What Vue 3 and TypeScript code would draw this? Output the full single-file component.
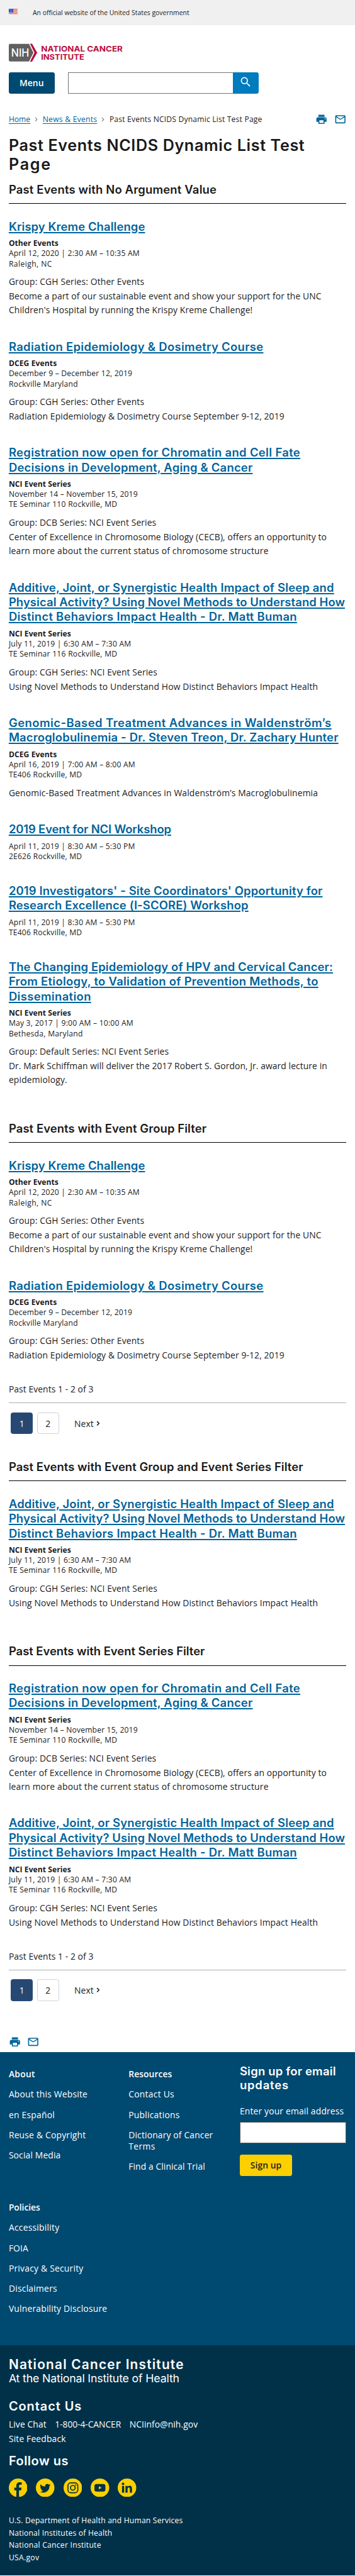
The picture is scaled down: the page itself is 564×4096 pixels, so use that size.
<script setup lang="ts">
import type { Directive } from 'vue'

interface Line {
  text: string
  width: number
}

interface EventItem {
  title: Line[]
  series?: Line
  meta: Line[]
  body?: Line[]
}

interface Section {
  heading: Line
  events: EventItem[]
  paged?: boolean
}

// Tracks a line of text so that it spans the given number of layout pixels.
const vFit: Directive<HTMLElement, number> = {
  mounted(el, { value }) {
    const root = el.closest('.page')
    const count = (el.textContent ?? '').trim().length
    if (!root || !value || count < 2) return
    const scale = root.getBoundingClientRect().width / 650
    const natural = el.getBoundingClientRect().width / scale
    el.style.letterSpacing = `${((value + 1.5 - natural) / (count - 1)).toFixed(4)}px`
  },
}

const line = (text: string, width: number): Line => ({ text, width })

const nciSeries = line('NCI Event Series', 112.5)
const dceg = line('DCEG Events', 86.5)

const krispy: EventItem = {
  title: [line('Krispy Kreme Challenge', 248)],
  series: line('Other Events', 89.5),
  meta: [line('April 12, 2020 | 2:30 AM – 10:35 AM', 238), line('Raleigh, NC', 77.5)],
  body: [
    line('Group: CGH Series: Other Events', 246.5),
    line('Become a part of our sustainable event and show your support for the UNC', 571),
    line("Children's Hospital by running the Krispy Kreme Challenge!", 445),
  ],
}

const radiation: EventItem = {
  title: [line('Radiation Epidemiology & Dosimetry Course', 464.5)],
  series: dceg,
  meta: [line('December 9 – December 12, 2019', 224.5), line('Rockville Maryland', 125)],
  body: [
    line('Group: CGH Series: Other Events', 246.5),
    line('Radiation Epidemiology & Dosimetry Course September 9-12, 2019', 503),
  ],
}

const chromatin: EventItem = {
  title: [
    line('Registration now open for Chromatin and Cell Fate', 532),
    line('Decisions in Development, Aging & Cancer', 445),
  ],
  series: nciSeries,
  meta: [line('November 14 – November 15, 2019', 234.5), line('TE Seminar 110 Rockville, MD', 197)],
  body: [
    line('Group: DCB Series: NCI Event Series', 268.5),
    line('Center of Excellence in Chromosome Biology (CECB), offers an opportunity to', 580.5),
    line('learn more about the current status of chromosome structure', 474),
  ],
}

const additive: EventItem = {
  title: [
    line('Additive, Joint, or Synergistic Health Impact of Sleep and', 594),
    line('Physical Activity? Using Novel Methods to Understand How', 614),
    line('Distinct Behaviors Impact Health - Dr. Matt Buman', 526),
  ],
  series: nciSeries,
  meta: [line('July 11, 2019 | 6:30 AM – 7:30 AM', 222.5), line('TE Seminar 116 Rockville, MD', 197)],
  body: [
    line('Group: CGH Series: NCI Event Series', 270.5),
    line('Using Novel Methods to Understand How Distinct Behaviors Impact Health', 564.5),
  ],
}

const sections: Section[] = [
  {
    heading: line('Past Events with No Argument Value', 379),
    events: [
      krispy,
      radiation,
      chromatin,
      additive,
      {
        title: [
          line('Genomic-Based Treatment Advances in Waldenström’s', 589),
          line('Macroglobulinemia - Dr. Steven Treon, Dr. Zachary Hunter', 602),
        ],
        series: dceg,
        meta: [line('April 16, 2019 | 7:00 AM – 8:00 AM', 230), line('TE406 Rockville, MD', 132.5)],
        body: [line('Genomic-Based Treatment Advances in Waldenström’s Macroglobulinemia', 564.5)],
      },
      {
        title: [line('2019 Event for NCI Workshop', 296)],
        meta: [line('April 11, 2019 | 8:30 AM – 5:30 PM', 229.5), line('2E626 Rockville, MD', 132.5)],
      },
      {
        title: [
          line("2019 Investigators' - Site Coordinators' Opportunity for", 573),
          line('Research Excellence (I-SCORE) Workshop', 437),
        ],
        meta: [line('April 11, 2019 | 8:30 AM – 5:30 PM', 229.5), line('TE406 Rockville, MD', 132.5)],
      },
      {
        title: [
          line('The Changing Epidemiology of HPV and Cervical Cancer:', 592),
          line('From Etiology, to Validation of Prevention Methods, to', 565),
          line('Dissemination', 149),
        ],
        series: nciSeries,
        meta: [line('May 3, 2017 | 9:00 AM – 10:00 AM', 226.5), line('Bethesda, Maryland', 134)],
        body: [
          line('Group: Default Series: NCI Event Series', 291.5),
          line('Dr. Mark Schiffman will deliver the 2017 Robert S. Gordon, Jr. award lecture in', 581.5),
          line('epidemiology.', 105.5),
        ],
      },
    ],
  },
  { heading: line('Past Events with Event Group Filter', 360.5), events: [krispy, radiation], paged: true },
  { heading: line('Past Events with Event Group and Event Series Filter', 537.5), events: [additive] },
  { heading: line('Past Events with Event Series Filter', 357.5), events: [chromatin, additive], paged: true },
]

const about: Line[] = [
  line('About this Website', 142.5),
  line('en Español', 82.5),
  line('Reuse & Copyright', 139.5),
  line('Social Media', 93.5),
]
const policies: Line[] = [
  line('Accessibility', 91),
  line('FOIA', 34),
  line('Privacy & Security', 135),
  line('Disclaimers', 87),
  line('Vulnerability Disclosure', 178.5),
]
const agencies: Line[] = [
  line('U.S. Department of Health and Human Services', 317),
  line('National Institutes of Health', 188),
  line('National Cancer Institute', 167.5),
  line('USA.gov', 54),
]
</script>

<template>
  <div class="page">
    <div class="banner">
      <svg class="flag" viewBox="0 0 16 11">
        <rect width="16" height="11" fill="#fff" />
        <g fill="#db3e1f">
          <rect v-for="n in 6" :key="n" :y="(n - 1) * 2" width="16" height="1" />
        </g>
        <rect width="8" height="7" fill="#1e33b1" />
        <g fill="#fff">
          <rect x="1" y="1" width="1" height="1" /><rect x="3" y="1" width="1" height="1" /><rect x="5" y="1" width="1" height="1" />
          <rect x="2" y="3" width="1" height="1" /><rect x="4" y="3" width="1" height="1" /><rect x="6" y="3" width="1" height="1" />
          <rect x="1" y="5" width="1" height="1" /><rect x="3" y="5" width="1" height="1" /><rect x="5" y="5" width="1" height="1" />
        </g>
      </svg>
      <span v-fit="285">An official website of the United States government</span>
    </div>

    <header class="header">
      <svg class="logo" viewBox="0 0 210 34">
        <path d="M2.5 1H37L45 17L37 33H2.500Q0 33 0 30.500V3.500Q0 1 2.500 1Z" fill="#606060" />
        <path d="M38.800 .5H42.600L52 17L42.600 33.500H38.800L47 17Z" fill="#bb0e3d" />
        <g font-family="Inter, sans-serif">
          <text x="4.300" y="24.300" font-size="20" font-weight="500" fill="#fff" textLength="33" lengthAdjust="spacingAndGlyphs">NIH</text>
          <g font-size="14.200" font-weight="700" fill="#bb0e3d">
            <text x="59" y="14.500" textLength="149.500" lengthAdjust="spacingAndGlyphs">NATIONAL CANCER</text>
            <text x="59" y="29.900" textLength="79" lengthAdjust="spacingAndGlyphs">INSTITUTE</text>
          </g>
        </g>
      </svg>
      <div class="nav">
        <button class="menu" type="button"><span v-fit="43">Menu</span></button>
        <div class="search">
          <div class="search-field"></div>
          <button class="search-button" type="button" aria-label="Search">
            <svg viewBox="0 0 24 24"><path d="M15.5 14h-.79l-.28-.27A6.47 6.47 0 0 0 16 9.5 6.5 6.5 0 1 0 9.5 16c1.61 0 3.09-.59 4.23-1.57l.27.28v.79l5 4.99L20.49 19zm-6 0a4.5 4.5 0 1 1 0-9 4.5 4.5 0 0 1 0 9z" fill="#fff" /></svg>
          </button>
        </div>
      </div>
    </header>

    <main class="main">
      <div class="crumb-row">
        <nav class="crumbs">
          <a v-fit="38">Home</a>
          <svg class="crumb-sep" viewBox="0 0 6 10"><path d="M1 1.2L4.6 5L1 8.8" fill="none" stroke="#71767a" stroke-width="1.3" /></svg>
          <a v-fit="98">News &amp; Events</a>
          <svg class="crumb-sep" viewBox="0 0 6 10"><path d="M1 1.2L4.6 5L1 8.8" fill="none" stroke="#71767a" stroke-width="1.3" /></svg>
          <span v-fit="278">Past Events NCIDS Dynamic List Test Page</span>
        </nav>
        <div class="share">
          <svg viewBox="0 0 24 24"><path d="M19 8H5c-1.660 0-3 1.340-3 3v6h4v4h12v-4h4v-6c0-1.660-1.340-3-3-3zm-3 11H8v-5h8v5zm3-7c-.55 0-1-.45-1-1s.45-1 1-1 1 .45 1 1-.45 1-1 1zm-1-9H6v4h12V3z" /></svg>
          <svg viewBox="0 0 24 24"><path d="M22 6c0-1.100-.9-2-2-2H4c-1.100 0-2 .9-2 2v12c0 1.100.9 2 2 2h16c1.100 0 2-.9 2-2V6zm-2 0-8 5-8-5h16zm0 12H4V8l8 5 8-5v10z" /></svg>
        </div>
      </div>

      <h1 class="title">
        <span v-fit="540" class="line">Past Events NCIDS Dynamic List Test</span>
        <span v-fit="75" class="line">Page</span>
      </h1>

      <section v-for="section in sections" :key="section.heading.text" class="section">
        <h2 class="section-title">
          <span v-fit="section.heading.width" class="line">{{ section.heading.text }}</span>
        </h2>
        <article v-for="event in section.events" :key="event.title[0].text" class="event">
          <h3 class="event-title">
            <a v-for="l in event.title" :key="l.text" v-fit="l.width" class="line">{{ l.text }}</a>
          </h3>
          <div class="meta">
            <strong v-if="event.series" v-fit="event.series.width" class="line">{{ event.series.text }}</strong>
            <span v-for="l in event.meta" :key="l.text" v-fit="l.width" class="line">{{ l.text }}</span>
          </div>
          <div v-if="event.body" class="body">
            <span v-for="l in event.body" :key="l.text" v-fit="l.width" class="line">{{ l.text }}</span>
          </div>
        </article>
        <div v-if="section.paged" class="pager">
          <p class="count"><span v-fit="153.5" class="line">Past Events 1 - 2 of 3</span></p>
          <div class="pages">
            <span class="page-button current">1</span>
            <span class="page-button">2</span>
            <span class="next">
              <span v-fit="34">Next</span>
              <svg viewBox="0 0 7 10"><path d="M1.300 1.300L5 5L1.300 8.700" fill="none" stroke="#1b1b1b" stroke-width="1.700" /></svg>
            </span>
          </div>
        </div>
      </section>

      <div class="share share-bottom">
        <svg viewBox="0 0 24 24"><path d="M19 8H5c-1.660 0-3 1.340-3 3v6h4v4h12v-4h4v-6c0-1.660-1.340-3-3-3zm-3 11H8v-5h8v5zm3-7c-.55 0-1-.45-1-1s.45-1 1-1 1 .45 1 1-.45 1-1 1zm-1-9H6v4h12V3z" /></svg>
        <svg viewBox="0 0 24 24"><path d="M22 6c0-1.100-.9-2-2-2H4c-1.100 0-2 .9-2 2v12c0 1.100.9 2 2 2h16c1.100 0 2-.9 2-2V6zm-2 0-8 5-8-5h16zm0 12H4V8l8 5 8-5v10z" /></svg>
      </div>
    </main>

    <footer>
      <div class="footer-main">
        <div class="footer-links">
          <div class="group">
            <strong v-fit="46.500" class="line">About</strong>
            <a v-for="l in about" :key="l.text" v-fit="l.width" class="line">{{ l.text }}</a>
          </div>
          <div class="group">
            <strong v-fit="78" class="line">Resources</strong>
            <a v-fit="82" class="line">Contact Us</a>
            <a v-fit="92" class="line">Publications</a>
            <div>
              <a v-fit="153" class="line">Dictionary of Cancer</a>
              <a v-fit="47" class="line">Terms</a>
            </div>
            <a v-fit="138.500" class="line">Find a Clinical Trial</a>
          </div>
          <div class="group policies">
            <strong v-fit="56" class="line">Policies</strong>
            <a v-for="l in policies" :key="l.text" v-fit="l.width" class="line">{{ l.text }}</a>
          </div>
        </div>
        <form class="signup">
          <h3>
            <span v-fit="174.500" class="line">Sign up for email</span>
            <span v-fit="87.500" class="line">updates</span>
          </h3>
          <label><span v-fit="189" class="line">Enter your email address</span></label>
          <div class="email"></div>
          <button type="button"><span v-fit="55.500">Sign up</span></button>
        </form>
      </div>

      <div class="footer-dark">
        <div class="agency">
          <strong v-fit="318.500" class="line">National Cancer Institute</strong>
          <span v-fit="311" class="line">At the National Institute of Health</span>
        </div>
        <h3 class="contact-title"><span v-fit="131.500" class="line">Contact Us</span></h3>
        <div class="contact">
          <div class="contact-row">
            <a v-fit="67.500">Live Chat</a>
            <a v-fit="119.500">1-800-4-CANCER</a>
            <a v-fit="123.500">NCIinfo@nih.gov</a>
          </div>
          <a v-fit="103" class="line">Site Feedback</a>
        </div>
        <h3 class="follow-title"><span v-fit="107.500" class="line">Follow us</span></h3>
        <div class="social">
          <svg viewBox="0 0 34 34">
            <circle cx="17" cy="17" r="17" class="disc" />
            <path class="glyph" d="M13.800 34V21.500H10V16.800H13.800V13.200C13.800 9.200 16.200 7 19.800 7H23.600V11.100H21.200C19.300 11.100 18.700 12 18.700 13.500V16.800H23.400L22.700 21.500H18.700V34Z" />
          </svg>
          <svg viewBox="0 0 34 34">
            <circle cx="17" cy="17" r="17" class="disc" />
            <path class="glyph" transform="translate(7.200 8) scale(.82)" d="M23.950 4.570a10 10 0 0 1-2.820.780 4.960 4.960 0 0 0 2.160-2.730c-.95.560-2 .960-3.130 1.190a4.920 4.920 0 0 0-8.380 4.480C7.690 8.090 4.070 6.130 1.640 3.160a4.930 4.930 0 0 0 1.520 6.570 4.900 4.900 0 0 1-2.230-.610v.060a4.930 4.930 0 0 0 3.950 4.830 5 5 0 0 1-2.210.080 4.940 4.940 0 0 0 4.600 3.420A9.870 9.870 0 0 1 0 19.540a13.990 13.990 0 0 0 7.550 2.210c9.050 0 14-7.500 14-13.990 0-.210 0-.420-.020-.630a9.940 9.940 0 0 0 2.460-2.550z" />
          </svg>
          <svg viewBox="0 0 34 34">
            <circle cx="17" cy="17" r="17" class="disc" />
            <rect x="8" y="8" width="18" height="18" rx="5" class="ring" />
            <circle cx="17" cy="17" r="4.300" class="ring" />
            <circle cx="22.200" cy="11.800" r="1.200" class="glyph" />
          </svg>
          <svg viewBox="0 0 34 34">
            <circle cx="17" cy="17" r="17" class="disc" />
            <rect x="7" y="10" width="20" height="14" rx="3.800" class="glyph" />
            <path class="disc" d="M15 14V20L20.200 17Z" />
          </svg>
          <svg viewBox="0 0 34 34">
            <circle cx="17" cy="17" r="17" class="disc" />
            <circle cx="9.800" cy="9.800" r="2.300" class="glyph" />
            <path class="glyph" d="M7.900 13.600H11.800V26H7.900ZM14.200 13.600H17.900V15.300C18.600 14 20 13.200 21.800 13.200C25.400 13.200 26.200 15.600 26.200 18.900V26H22.300V19.700C22.300 18.200 22.200 16.500 20.300 16.500C18.400 16.500 18.100 18 18.100 19.600V26H14.200Z" />
          </svg>
        </div>
        <div class="agencies">
          <a v-for="l in agencies" :key="l.text" v-fit="l.width" class="line">{{ l.text }}</a>
        </div>
      </div>
    </footer>
  </div>
</template>

<style>
body {
  margin: 0;
  background: #fff;
}
</style>

<style scoped>
.page {
  box-sizing: border-box;
  zoom: 0.867692;
  width: 650px;
  height: 4720px;
  overflow: hidden;
  display: flex;
  flex-direction: column;
  background: #fff;
  color: #1b1b1b;
  font-family: 'Open Sans', sans-serif;
  font-size: 16px;
  white-space: nowrap;
}
.page * {
  box-sizing: border-box;
}
h1,
h2,
h3,
p {
  margin: 0;
}
button {
  border: 0;
  padding: 0;
  font: inherit;
}
.line {
  display: block;
  width: max-content;
}
.banner {
  display: flex;
  align-items: center;
  gap: 28px;
  height: 46px;
  padding: 0 16px;
  background: #f0f0f0;
  font-size: 12px;
}
.flag {
  width: 16px;
  height: 11px;
  margin-bottom: 3px;
}
.header {
  padding: 34px 16px 0;
}
.logo {
  display: block;
  width: 210px;
  height: 34px;
}
.nav {
  display: flex;
  gap: 24px;
  margin-top: 18px;
}
.menu {
  width: 84px;
  height: 40px;
  border-radius: 4px;
  background: #004971;
  color: #fff;
  font-weight: 600;
}
.search {
  display: flex;
  width: 350px;
  height: 40px;
}
.search-field {
  flex: 1;
  border: 1px solid #71767a;
  border-right: 0;
}
.search-button {
  display: flex;
  align-items: center;
  justify-content: center;
  width: 48px;
  border-radius: 0 4px 4px 0;
  background: #007bbd;
}
.search-button svg {
  width: 24px;
  height: 24px;
  margin-bottom: 3px;
}
.main {
  height: 3589px;
  padding: 35px 16px 0;
}
.crumb-row {
  display: flex;
  align-items: center;
  justify-content: space-between;
  height: 24px;
}
.crumbs {
  display: flex;
  align-items: center;
  gap: 8.300px;
  font-size: 14px;
}
.crumbs a {
  color: #00649c;
  text-decoration: underline;
  text-underline-offset: 2px;
}
.crumb-sep {
  width: 6px;
  height: 9px;
}
.share {
  display: flex;
  gap: 11.600px;
}
.share svg {
  width: 22.400px;
  height: 22.400px;
  fill: #00649c;
}
.share-bottom {
  margin-top: 63px;
}
.title {
  margin-top: 17.500px;
  font: 600 29px/35px Inter, sans-serif;
}
.section {
  padding-top: 22px;
}
.title + .section {
  padding-top: 15.500px;
}
.section-title {
  height: 40px;
  margin-bottom: 28px;
  border-bottom: 1px solid #000;
  font: 600 21.300px/27px Inter, sans-serif;
}
.event {
  padding-bottom: 40px;
}
.event-title {
  font: 600 21.300px/27.070px Inter, sans-serif;
}
.event-title a {
  color: #00649c;
  text-decoration: underline;
  text-decoration-thickness: 2px;
  text-underline-offset: 2.500px;
}
.meta {
  margin-top: 8px;
  font-size: 14px;
  line-height: 18.667px;
}
.body {
  margin-top: 11px;
  line-height: 26px;
}
.count {
  height: 35px;
  border-bottom: 1px solid #a9aeb1;
  line-height: 18px;
}
.pages {
  display: flex;
  align-items: center;
  gap: 8px;
  margin-top: 16.500px;
  padding: 0 4px;
}
.page-button {
  display: flex;
  align-items: center;
  justify-content: center;
  width: 40px;
  height: 40px;
  border: 1px solid #d0d2d5;
  border-radius: 4px;
}
.page-button.current {
  border-color: #274873;
  background: #274873;
  color: #fff;
}
.next {
  display: flex;
  align-items: center;
  gap: 5px;
  margin-left: 20px;
}
.next svg {
  width: 7px;
  height: 10px;
}
.pager {
  padding-bottom: 24.300px;
}
.section:last-of-type .pager {
  padding-bottom: 0;
}
.footer-main {
  display: grid;
  grid-template-columns: 423px 195px;
  height: 537px;
  padding: 0 16px;
  background: #004971;
  color: #fff;
}
.footer-links {
  display: grid;
  grid-template-columns: 219.400px 1fr;
  grid-template-rows: 244.300px 1fr;
  padding-top: 30px;
}
.group {
  display: flex;
  flex-direction: column;
  gap: 16px;
  line-height: 21px;
}
.group strong {
  font-weight: 600;
}
.signup {
  padding-top: 23px;
}
.signup h3 {
  font: 600 21.300px/25px Inter, sans-serif;
}
.signup label {
  display: block;
  margin-top: 24px;
  line-height: 21px;
}
.email {
  height: 40px;
  margin-top: 9px;
  border: 1px solid #565c65;
  background: #fff;
}
.signup button {
  width: 96px;
  height: 40px;
  margin-top: 20px;
  border-radius: 4px;
  background: #fccf00;
  color: #1b1b1b;
  font-weight: 600;
}
.footer-dark {
  height: 422px;
  padding: 21.500px 16px 0;
  background: #003149;
  color: #fff;
}
.agency strong {
  font: 600 24px/28px Inter, sans-serif;
}
.agency span {
  font: 400 20.500px/24px Inter, sans-serif;
}
.contact-title {
  margin-top: 25px;
  font: 600 23px/26px Inter, sans-serif;
}
.contact {
  margin-top: 8px;
  line-height: 26px;
}
.contact-row {
  display: flex;
  gap: 15.500px;
}
.follow-title {
  margin-top: 15px;
  font: 600 23px/26px Inter, sans-serif;
}
.social {
  display: flex;
  gap: 16px;
  margin-top: 18px;
}
.social svg {
  width: 34px;
  height: 34px;
}
.disc {
  fill: #fccf00;
}
.glyph {
  fill: #003149;
}
.ring {
  fill: none;
  stroke: #003149;
  stroke-width: 1.900;
}
.agencies {
  margin-top: 32px;
  font-size: 14px;
  line-height: 22.700px;
}
</style>
